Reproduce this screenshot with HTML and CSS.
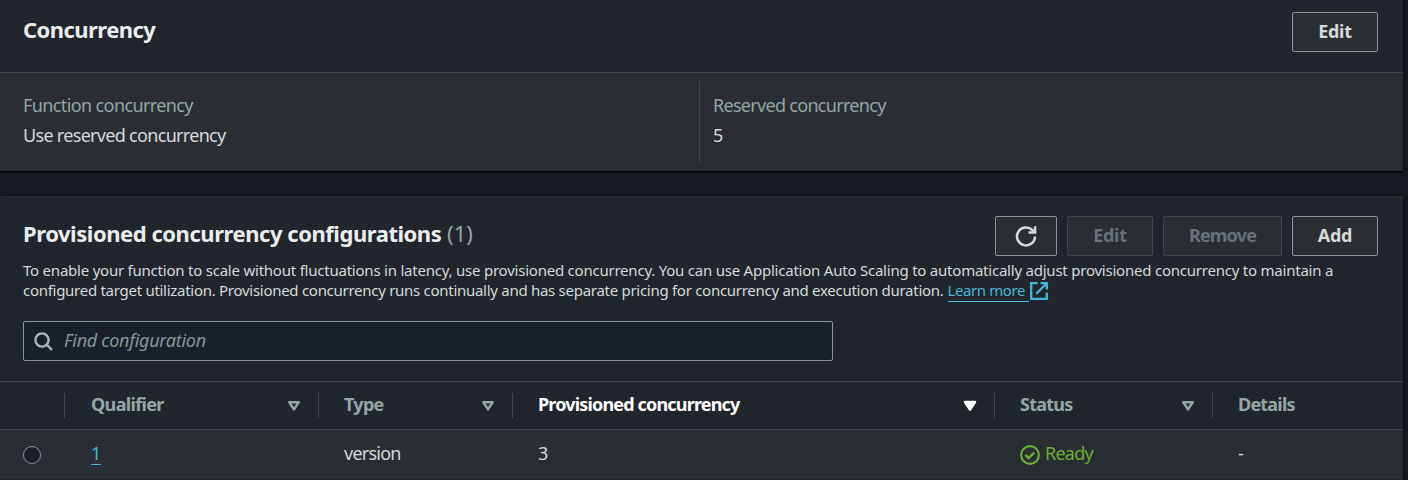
FILE: index.html
```html
<!DOCTYPE html>
<html lang="en">
<head>
<meta charset="utf-8">
<title>Concurrency</title>
<link rel="stylesheet" href="styles.css">
</head>
<body>
<main class="page">
  <section class="panel summary">
    <header class="panel-header">
      <h2 class="title"><span class="t-conc">Concurrency</span></h2>
      <button class="btn btn-edit">Edit</button>
    </header>
    <div class="fields">
      <div class="field">
        <div class="label"><span class="t-func">Function concurrency</span></div>
        <div class="value"><span class="t-use">Use reserved concurrency</span></div>
      </div>
      <div class="field field-split">
        <div class="label"><span class="t-res">Reserved concurrency</span></div>
        <div class="value">5</div>
      </div>
    </div>
  </section>

  <section class="panel configs">
    <header class="config-header">
      <h2 class="title"><span class="t-prov">Provisioned concurrency configurations</span> <span class="count">(1)</span></h2>
      <div class="actions">
        <button class="btn btn-refresh" aria-label="Refresh">
          <svg width="22" height="22" viewBox="0 0 22 22" fill="none" stroke="#d5dbdb" stroke-width="2.5"><path d="M20 11.5a9 9 0 1 1-2.6-6.4l2 2"/><path d="M20.1 1.3v6.2h-6.6"/></svg>
        </button>
        <button class="btn btn-edit" disabled>Edit</button>
        <button class="btn btn-remove" disabled>Remove</button>
        <button class="btn btn-edit">Add</button>
      </div>
    </header>
    <div class="description">
      <div><span class="t-d1">To enable your function to scale without fluctuations in latency, use provisioned concurrency. You can use Application Auto Scaling to automatically adjust provisioned concurrency to maintain a</span></div>
      <div class="desc-row"><span class="t-d2">configured target utilization. Provisioned concurrency runs continually and has separate pricing for concurrency and execution duration.</span><a class="learn"><span class="t-learn">Learn more</span></a><svg class="external" width="18" height="18" viewBox="0 0 18 18" fill="none" stroke="#44b9d6" stroke-width="2.3"><path d="M7.5 1.2H1.2v15.6h15.6v-6.3"/><path d="M10.5 1.2h6.3v6.3M16.5 1.5 6.2 11.8"/></svg></div>
    </div>
    <div class="search">
      <svg class="search-icon" width="20" height="20" viewBox="0 0 20 20" fill="none" stroke="#aab7b8" stroke-width="2.4"><circle cx="8" cy="8" r="6.6"/><path d="M12.7 12.7 18 18"/></svg>
      <span class="placeholder">Find configuration</span>
    </div>
    <div class="table">
      <div class="row head">
        <div class="cell"></div>
        <div class="cell split first"><span class="t-qual">Qualifier</span><svg class="sort" width="14" height="12" viewBox="0 0 14 12"><path d="M2.3 2.2h9.4L7 9.4z"/></svg></div>
        <div class="cell split"><span class="t-type">Type</span><svg class="sort" width="14" height="12" viewBox="0 0 14 12"><path d="M2.3 2.2h9.4L7 9.4z"/></svg></div>
        <div class="cell split active"><span class="t-pc">Provisioned concurrency</span><svg class="sort" width="14" height="12" viewBox="0 0 14 12"><path d="M2 2h10L7 9.6z"/></svg></div>
        <div class="cell split"><span class="t-stat">Status</span><svg class="sort" width="14" height="12" viewBox="0 0 14 12"><path d="M2.3 2.2h9.4L7 9.4z"/></svg></div>
        <div class="cell split"><span class="t-det">Details</span></div>
      </div>
      <div class="row body">
        <div class="cell"><span class="radio"></span></div>
        <div class="cell first"><a class="qualifier">1</a></div>
        <div class="cell"><span class="t-ver">version</span></div>
        <div class="cell"><span>3</span></div>
        <div class="cell ready"><svg class="ready-icon" width="20" height="20" viewBox="0 0 20 20" fill="none" stroke="#6aaf35" stroke-width="2.1"><circle cx="10" cy="10" r="8.9"/><path d="m5.4 9.8 3.2 3.2 5.6-5.4" stroke-width="2.4"/></svg><span class="t-ready">Ready</span></div>
        <div class="cell"><span>-</span></div>
      </div>
    </div>
  </section>
</main>
</body>
</html>
```
FILE: styles.css
```css
* { box-sizing: border-box; }
body {
  margin: 0;
  height: 480px;
  overflow: hidden;
  background: #16191f;
  color: #d5dbdb;
  font: 18px/22px "Noto Sans", "Open Sans", sans-serif;
  white-space: nowrap;
}
.page { display: flex; flex-direction: column; gap: 25px; width: 1403px; }
.panel { background: #21252c; box-shadow: 0 1px 1px rgba(0, 0, 0, .75), 1px 1px 3px rgba(0, 0, 0, .5); }
.panel-header {
  display: flex;
  justify-content: space-between;
  height: 73px;
  padding: 12px 25px 0 23px;
  border-bottom: 1px solid #414750;
}
.title { margin: 0; font-size: 22px; line-height: 34px; font-weight: 700; color: #eaeded; }
.count { font-weight: 400; color: #95a5a6; }
.btn {
  display: flex;
  align-items: center;
  justify-content: center;
  height: 40px;
  padding: 0 0 3px;
  border: 1px solid #879596;
  border-radius: 2px;
  background: #2a2e33;
  color: #d5dbdb;
  font: 700 18px/22px "Noto Sans", sans-serif;
  letter-spacing: -.3px;
}
.btn-edit { width: 86px; }
.btn-remove { width: 119px; letter-spacing: -.8px; }
.btn-refresh { width: 62px; padding: 0 0 1px; }
.btn:disabled { border-color: #414750; color: #687078; }
.fields { display: grid; grid-template-columns: 699px 1fr; height: 98px; padding: 8px 0; background: #2a2e33; }
.field { padding: 13px 0 0 23px; }
.field-split { padding-left: 13px; border-left: 1px solid #414750; }
.label { color: #95a5a6; }
.value { margin-top: 8px; }

.configs { height: 300px; border-top: 1px solid #2a2e33; }
.config-header { display: flex; justify-content: space-between; height: 63px; padding: 19px 25px 0 23px; }
.actions { display: flex; gap: 10px; }
.description { height: 41px; padding-left: 23px; font-size: 15px; line-height: 20px; }
.desc-row { display: flex; height: 21px; }
.learn { height: 22px; margin-left: 4px; width: 81px; color: #44b9d6; border-bottom: 1px solid #44b9d6; }
.external { margin: 2px 0 0 1px; }
.search {
  display: flex;
  align-items: center;
  width: 810px;
  height: 40px;
  margin: 20px 0 20px 23px;
  padding-left: 10px;
  gap: 10px;
  border: 1px solid #879596;
  border-radius: 2px;
  background: #1a2029;
}
.search-icon { margin-top: 1px; }
.placeholder { margin-bottom: 2px; font-style: italic; letter-spacing: -.28px; color: #879596; }
.row { display: grid; grid-template-columns: 64px 254px 194px 482px 218px 191px; }
.head { height: 49px; padding: 11px 0; border-top: 1px solid #414750; border-bottom: 1px solid #414750; font-weight: 700; color: #95a5a6; }
.cell { display: flex; align-items: center; justify-content: space-between; padding: 0 17px 0 26px; }
.cell.first { padding-left: 27px; }
.split { padding-left: 25px; border-left: 1px solid #414750; }
.split.first { padding-left: 26px; }
.head span { margin-bottom: 3px; }
.active { color: #fff; }
.sort { fill: none; stroke: #95a5a6; stroke-width: 2.5; stroke-linejoin: round; }
.active .sort { fill: #fff; stroke: #fff; }
.body { height: 50px; padding-bottom: 2px; background: #2a2e33; border-bottom: 1px solid #21252c; }
.body span { margin-bottom: 2px; }
.body .radio { flex: none; width: 18px; height: 18px; margin: 2px 0 0 -3px; border: 1px solid #879596; border-radius: 50%; background: #1a2029; }
.qualifier { line-height: 22px; color: #44b9d6; border-bottom: 1px solid #44b9d6; }
.ready { justify-content: flex-start; gap: 5px; color: #6aaf35; }
.ready-icon { margin-top: 2px; }

/* Tracking that keeps each string at its condensed width */
.t-conc { letter-spacing: -.56px; }
.t-prov { letter-spacing: -.46px; }
.t-func { letter-spacing: -.61px; }
.t-use { letter-spacing: -.69px; }
.t-res { letter-spacing: -.7px; }
.t-d1 { letter-spacing: -.224px; }
.t-d2 { letter-spacing: -.28px; }
.t-learn { letter-spacing: -.4px; }
.t-qual { letter-spacing: -.65px; }
.t-type { letter-spacing: -.7px; }
.t-pc { letter-spacing: -.83px; }
.t-stat { letter-spacing: -.75px; }
.t-det { letter-spacing: -.8px; }
.t-ver, .t-ready { letter-spacing: -.76px; }
```
